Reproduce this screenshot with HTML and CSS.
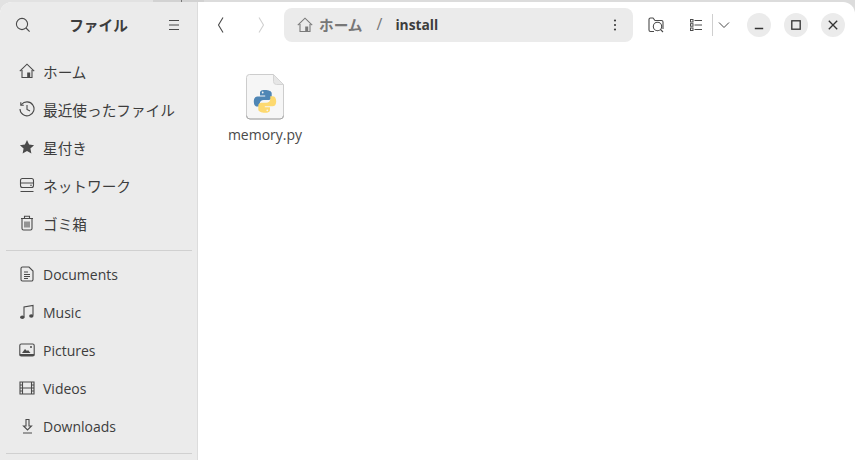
FILE: index.html
```html
<!DOCTYPE html>
<html lang="ja">
<head>
<meta charset="utf-8">
<title>ファイル</title>
<link rel="stylesheet" href="styles.css">
</head>
<body>
<div class="window">
  <aside class="sidebar">
    <header class="side-head">
      <svg class="ic" viewBox="0 0 16 16"><circle cx="7" cy="7" r="5.6"/><path d="M11 11l3.6 3.6"/></svg>
      <h1 class="app-title">ファイル</h1>
      <svg class="ic" viewBox="0 0 16 16"><path d="M3 3.500h10M3 8h10M3 12.500h10"/></svg>
    </header>
    <nav class="places first">
      <a class="place"><svg class="ic" viewBox="0 0 16 16"><path d="M.8 8.200L8 1.200l7.200 7M3 7v7.500h10V7"/><rect class="fill" x="8.200" y="9.500" width="3" height="5"/></svg><span class="jp">ホーム</span></a>
      <a class="place"><svg class="ic" viewBox="0 0 16 16"><path d="M2.500 3.500A7 7 0 1 1 1 8M1.800 1.200v3h3M8 4v4.500l3 1.500"/></svg><span class="jp">最近使ったファイル</span></a>
      <a class="place"><svg class="ic" viewBox="0 0 16 16"><path class="fill" d="M8 1l2.100 4.600 5 .6-3.700 3.400 1 5L8 11.900l-4.400 2.700 1-5L.9 6.200l5-.6z"/></svg><span class="jp">星付き</span></a>
      <a class="place"><svg class="ic" viewBox="0 0 16 16"><rect x="1.500" y="1.500" width="13" height="9" rx="2"/><path d="M1.500 6h13M1.500 14.500h13"/><circle class="fill" cx="12" cy="8.300" r=".8"/></svg><span class="jp">ネットワーク</span></a>
      <a class="place"><svg class="ic" viewBox="0 0 16 16"><path d="M2 3.500h12M3 3.500v10a1.500 1.500 0 0 0 1.500 1.500h7a1.500 1.500 0 0 0 1.500-1.500v-10M5.500 3V1.200h5V3M6 6.500v6M8 6.500v6M10 6.500v6"/></svg><span class="jp">ゴミ箱</span></a>
    </nav>
    <hr class="rule">
    <nav class="places second">
      <a class="place"><svg class="ic" viewBox="0 0 16 16"><path d="M3.500 1h6.500l4 4v8.500a1.500 1.500 0 0 1-1.500 1.500h-9A1.500 1.500 0 0 1 2 13.500v-11A1.500 1.500 0 0 1 3.500 1zM5 6h4M5 8.500h6M5 10.500h6M5 12.500h4"/></svg><span>Documents</span></a>
      <a class="place"><svg class="ic" viewBox="0 0 16 16"><path d="M5 13V3l9-1.500V11.500"/><ellipse class="fill" cx="3.300" cy="13.300" rx="2.200" ry="1.700"/><ellipse class="fill" cx="12.300" cy="12" rx="2.200" ry="1.700"/></svg><span>Music</span></a>
      <a class="place"><svg class="ic" viewBox="0 0 16 16"><rect x=".8" y="2" width="14.400" height="12" rx="1.500"/><path class="fill" d="M3 11l3-4 2 2 1-1 2.500 3zM.8 12h14.400v2H.8z"/><circle class="fill" cx="12" cy="5" r="1"/></svg><span>Pictures</span></a>
      <a class="place"><svg class="ic" viewBox="0 0 16 16"><path d="M1 2h14v12H1zM3.500 2v12M12.500 2v12M3.500 8h9M1 5h2.500M1 8h2.500M1 11h2.500M12.500 5H15M12.500 8H15M12.500 11H15"/></svg><span>Videos</span></a>
      <a class="place"><svg class="ic" viewBox="0 0 16 16"><path d="M7 1.500h3v6.500h2.500L8.500 12l-4-4H7zM4 15h9"/></svg><span>Downloads</span></a>
    </nav>
    <hr class="rule">
  </aside>
  <main class="content">
    <header class="toolbar">
      <button class="nav-btn"><svg class="ic" viewBox="0 0 16 16"><path d="M10 .5L5.500 8l4.500 7.500"/></svg></button>
      <button class="nav-btn off"><svg class="ic" viewBox="0 0 16 16"><path d="M6 .5L10.500 8 6 15.500"/></svg></button>
      <div class="pathbar">
        <svg class="ic muted" viewBox="0 0 16 16"><path d="M.8 8.200L8 1.200l7.200 7M3 7v7.500h10V7"/><rect class="fill" x="8.200" y="9.500" width="3" height="5"/></svg>
        <span class="crumb jp">ホーム</span>
        <span class="slash">/</span>
        <span class="current">install</span>
        <svg class="dots" viewBox="0 0 4 12"><circle cx="2" cy="1.500" r="1.100"/><circle cx="2" cy="6" r="1.100"/><circle cx="2" cy="10.500" r="1.100"/></svg>
      </div>
      <svg class="ic search-folder" viewBox="0 0 16 16"><path d="M6 14.500H2.500A1.500 1.500 0 0 1 1 13V2.500A1.500 1.500 0 0 1 2.500 1H5l2 2.500h6.500A1.500 1.500 0 0 1 15 5v7"/><circle cx="9.500" cy="9.500" r="4.200"/><path d="M12.500 12.500l2.500 2.500"/></svg>
      <div class="view-switch">
        <svg class="list-ic" viewBox="0 0 12 12"><path d="M4.500 1.500H12M4.500 6H12M4.500 10.500H12"/><rect x=".5" y=".5" width="2.500" height="2.500"/><rect x=".5" y="4.700" width="2.500" height="2.500"/><rect x=".5" y="9" width="2.500" height="2.500"/></svg>
        <i class="sep"></i>
        <svg class="chev" viewBox="0 0 12 12"><path d="M1 3.500l5 5 5-5"/></svg>
      </div>
      <div class="win-btns">
        <button class="win-btn"><svg viewBox="0 0 10 10"><path d="M1.500 7.900h7"/></svg></button>
        <button class="win-btn"><svg viewBox="0 0 10 10"><rect x="1.500" y="1.500" width="7" height="7"/></svg></button>
        <button class="win-btn"><svg viewBox="0 0 10 10"><path d="M1.500 1.500l7 7M8.500 1.500l-7 7"/></svg></button>
      </div>
    </header>
    <section class="files">
      <figure class="file">
        <svg class="file-icon" viewBox="0 0 38 46">
          <path class="page" d="M3.500.5h24l10 10v31a3.500 3.500 0 0 1-3.500 3.500H4A3.500 3.500 0 0 1 .5 41.500V3.500a3 3 0 0 1 3-3z"/>
          <path class="edge" d="M.5 41.500A3.500 3.500 0 0 0 4 45h30a3.500 3.500 0 0 0 3.500-3.500"/>
          <path class="fold" d="M27.500.5v7a3 3 0 0 0 3 3h7z"/>
          <path fill="#4f86b5" d="M18.800 16c-4.300 0-4.800 1.600-4.800 3.200v2.300h5.200v1h-7.700c-2.200 0-3.700 1.700-3.700 4.900 0 3.300 1.400 5.100 3.500 5.100h2.400v-2.800c0-2.200 1.800-3.700 4-3.700h5c1.800 0 3-1.300 3-3v-3.800c0-1.900-2.700-3.200-6.900-3.200z"/>
          <path fill="#fdd96f" d="M19.200 38.800c4.300 0 4.800-1.600 4.800-3.200v-2.300h-5.200v-1h7.700c2.200 0 3.700-1.700 3.700-4.900 0-3.300-1.400-5.100-3.500-5.100h-2.400v2.800c0 2.200-1.800 3.700-4 3.700h-5c-1.800 0-3 1.300-3 3v3.800c0 1.900 2.700 3.200 6.900 3.200z"/>
          <circle cx="16.700" cy="18.500" r=".9" fill="#f4f4f4"/>
          <circle cx="21.300" cy="36.300" r=".9" fill="#f4f4f4"/>
        </svg>
        <figcaption class="file-name">memory.py</figcaption>
      </figure>
    </section>
  </main>
</div>
</body>
</html>
```
FILE: styles.css
```css
* { box-sizing: border-box; }
html, body { margin: 0; height: 100%; }
body {
  background: linear-gradient(90deg, #e2e2e2 0 153px, #d2d2d2 153px 181px, #777 181px 182px, #d2d2d2 182px 204px, #dcdcdc 204px);
  padding-top: 2px;
  overflow: hidden;
  font-family: "Open Sans", "Noto Sans CJK JP", sans-serif;
  color: #3d3d3d;
}
.window {
  display: flex;
  height: 458px;
  background: #fff;
  border-radius: 12px 12px 0 0;
  overflow: hidden;
}
.jp { font-family: "Noto Sans CJK JP", sans-serif; font-size: 14.67px; }
.ic { width: 16px; height: 16px; flex: none; fill: none; stroke: #4a4a4a; stroke-width: 1.1; }
.ic .fill { fill: #4a4a4a; stroke: none; }
.sidebar {
  width: 198px;
  flex: none;
  background: #ebebeb;
  border-right: 1px solid #dcdcdc;
  padding: 0 5px 0 6px;
}
.side-head {
  display: flex;
  align-items: center;
  justify-content: space-between;
  height: 46px;
  padding: 0 10px 0 9px;
}
.app-title {
  margin: 0 0 2px;
  font-family: "Noto Sans CJK JP", sans-serif;
  font-size: 14.67px;
  font-weight: 700;
  color: #3d3d3d;
}
.places { display: flex; flex-direction: column; }
.places.first { padding: 4px 0 8px; }
.places.second { padding: 4px 0 8px; }
.place {
  display: flex;
  align-items: center;
  gap: 8px;
  height: 38px;
  padding-left: 13px;
  font-size: 14px;
  color: #3d3d3d;
}
.rule { margin: 0; border: 0; border-top: 1px solid #d0d0d0; }
.content { flex: 1; display: flex; flex-direction: column; min-width: 0; }
.toolbar {
  display: flex;
  align-items: center;
  height: 46px;
  padding: 0 10px 0 0;
}
.nav-btn {
  width: 40px;
  height: 34px;
  margin: 0;
  padding: 0;
  border: 0;
  background: none;
  display: flex;
  align-items: center;
  justify-content: center;
}
.nav-btn.off .ic { stroke: #d0d0d0; }
.nav-btn:first-child { margin-left: 3px; }
.pathbar {
  display: flex;
  align-items: center;
  width: 349px;
  height: 34px;
  margin-left: 3px;
  padding: 0 16px 0 13px;
  background: #ebebeb;
  border-radius: 8px;
  font-size: 14px;
}
.ic.muted { stroke: #7a7a7a; }
.ic.muted .fill { fill: #7a7a7a; }
.crumb { margin: 0 0 2px 6px; color: #777; font-weight: 700; }
.slash { margin: 0 0 2px 14px; color: #777; font-size: 16px; }
.current { margin: 0 0 2px 13px; font-weight: 700; font-size: 13.8px; color: #3d3d3d; }
.dots { width: 4px; height: 12px; margin-left: auto; fill: #3d3d3d; }
.search-folder { margin-left: 15px; }
.view-switch { display: flex; align-items: center; margin-left: 26px; }
.list-ic { width: 12px; height: 12px; fill: none; stroke: #4a4a4a; stroke-width: 1; }
.sep { width: 1px; height: 22px; margin: 0 5px 0 10px; background: #cfcfcf; }
.chev { width: 12px; height: 12px; fill: none; stroke: #4a4a4a; stroke-width: 1; }
.win-btns { display: flex; gap: 13px; margin-left: 17px; }
.win-btn {
  width: 24px;
  height: 24px;
  padding: 6px;
  border: 0;
  border-radius: 50%;
  background: #ebebeb;
  display: flex;
}
.win-btn svg { width: 12px; height: 12px; fill: none; stroke: #333; stroke-width: 1.1; }
.files { flex: 1; padding: 25px 0 0 20px; }
.file {
  margin: 0;
  width: 94px;
  display: flex;
  flex-direction: column;
  align-items: center;
}
.file-icon { width: 38px; height: 46px; margin-top: 1px; }
.page { fill: #f6f6f6; stroke: #cdcdcd; stroke-width: 1; }
.edge { fill: none; stroke: #a8a8a8; stroke-width: 1; }
.fold { fill: #e6e6e6; stroke: #d4d4d4; stroke-width: 1; }
.file-name { margin-top: 5px; font-size: 14px; color: #4a4a4a; }
```
